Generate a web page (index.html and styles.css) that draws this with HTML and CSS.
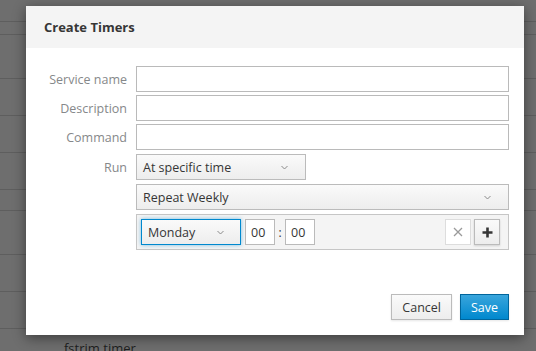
FILE: index.html
```html
<!DOCTYPE html>
<html>
<head>
  <title>Create Timers</title>
  <link rel="stylesheet" href="styles.css">
</head>
<body>
  <div class="page">
    <div class="row" style="height: 22px"></div>
    <div class="row" style="height: 13px"></div>
    <div class="row" style="height: 44px"></div>
    <div class="row" style="height: 37px"></div>
    <div class="row" style="height: 37px"></div>
    <div class="row" style="height: 37px"></div>
    <div class="row" style="height: 21px"></div>
    <div class="row" style="height: 44px"></div>
    <div class="row" style="height: 37px"></div>
    <div class="row" style="height: 37px"></div>
    <div class="row last"><span>fstrim.timer</span></div>
  </div>

  <div class="modal">
    <div class="modal-header">
      <h1>Create Timers</h1>
    </div>
    <div class="modal-body">
      <div class="field">
        <label>Service name</label>
        <div class="control"><input class="text" type="text"></div>
      </div>
      <div class="field">
        <label>Description</label>
        <div class="control"><input class="text" type="text"></div>
      </div>
      <div class="field">
        <label>Command</label>
        <div class="control"><input class="text" type="text"></div>
      </div>
      <div class="field spaced">
        <label>Run</label>
        <div class="control">
          <div class="select run">
            <span>At specific time</span>
            <svg class="caret" width="7" height="5" viewBox="0 0 7 5"><path d="M0.5 1 L3.5 4 L6.5 1" fill="none" stroke="#8a8a8a" stroke-width="1"/></svg>
          </div>
        </div>
      </div>
      <div class="field spaced">
        <label></label>
        <div class="control">
          <div class="select">
            <span>Repeat Weekly</span>
            <svg class="caret" width="7" height="5" viewBox="0 0 7 5"><path d="M0.5 1 L3.5 4 L6.5 1" fill="none" stroke="#8a8a8a" stroke-width="1"/></svg>
          </div>
        </div>
      </div>
      <div class="field spaced">
        <label></label>
        <div class="control">
          <div class="repeat-box">
            <div class="select day">
              <span>Monday</span>
              <svg class="caret" width="7" height="5" viewBox="0 0 7 5"><path d="M0.5 1 L3.5 4 L6.5 1" fill="none" stroke="#8a8a8a" stroke-width="1"/></svg>
            </div>
            <input class="time hours" type="text" value="00">
            <span class="colon">:</span>
            <input class="time" type="text" value="00">
            <div class="spacer"></div>
            <button class="icon-btn remove">
              <svg width="10" height="10" viewBox="0 0 10 10"><path d="M1 1 L9 9 M9 1 L1 9" stroke="#9a9a9a" stroke-width="1.3"/></svg>
            </button>
            <button class="icon-btn add">
              <svg width="11" height="11" viewBox="0 0 11 11"><path d="M5.5 0.5 V10.5 M0.5 5.5 H10.5" stroke="#363636" stroke-width="2.6"/></svg>
            </button>
          </div>
        </div>
      </div>
    </div>
    <div class="modal-footer">
      <button class="btn">Cancel</button>
      <button class="btn primary">Save</button>
    </div>
  </div>
</body>
</html>
```

FILE: styles.css
```css
html, body {
  margin: 0;
  padding: 0;
  height: 100%;
  overflow: hidden;
}

body {
  background-color: #6e6e6e;
  font-family: "Open Sans", "Noto Sans", sans-serif;
  font-size: 12px;
  color: #363636;
}

/* Page behind the dialog, dimmed */
.page {
  display: flex;
  flex-direction: column;
}

.row {
  border-bottom: 1px solid #5e5e5e;
  box-sizing: border-box;
}

.row.last {
  border-bottom: none;
  height: 30px;
  padding: 10px 0 0 64px;
  font-size: 13px;
  color: #1e1e1e;
}

.modal {
  position: absolute;
  left: 26px;
  top: 6px;
  width: 498px;
  height: 329px;
  background-color: #fff;
  box-shadow: 0 3px 12px rgba(0, 0, 0, 0.45);
  display: flex;
  flex-direction: column;
}

.modal-header {
  height: 42px;
  background-color: #f4f4f4;
  display: flex;
  align-items: center;
  padding-left: 18px;
}

.modal-header h1 {
  margin: 0;
  font-size: 13px;
  font-weight: bold;
  color: #363636;
}

.modal-body {
  flex: 1;
  padding: 18px 15px 0 14px;
  display: flex;
  flex-direction: column;
  gap: 3px;
}

.field {
  display: flex;
  align-items: center;
}

.field.spaced {
  margin-top: 1px;
}

.field label {
  width: 87px;
  margin-right: 9px;
  text-align: right;
  color: #86888a;
  font-size: 12.5px;
}

.control {
  flex: 1;
}

input.text {
  display: block;
  box-sizing: border-box;
  width: 100%;
  height: 26px;
  border: 1px solid #bababa;
  margin: 0;
  padding: 0 6px;
  font-family: inherit;
}

.select {
  box-sizing: border-box;
  height: 26px;
  border: 1px solid #bbb;
  background: linear-gradient(#fafafa, #ededed);
  display: flex;
  align-items: center;
  justify-content: space-between;
  padding: 0 17px 0 6px;
  font-size: 12.5px;
  color: #363636;
}

.select.run {
  width: 170px;
}

.repeat-box {
  box-sizing: border-box;
  height: 36px;
  border: 1px solid #c6c6c6;
  background-color: #f4f4f4;
  padding: 4px 8px 4px 4px;
  display: flex;
  align-items: center;
}

.select.day {
  width: 100px;
  height: 26px;
  border-color: #0088ce;
  box-shadow: 0 0 4px rgba(0, 136, 206, 0.5);
  padding-right: 16px;
}

input.time {
  box-sizing: border-box;
  width: 30px;
  height: 26px;
  margin: 0;
  border: 1px solid #bababa;
  background-color: #fff;
  padding: 0 5px;
  font-family: inherit;
  font-size: 12.5px;
  color: #363636;
}

input.time.hours {
  margin-left: 4px;
}

.colon {
  width: 10px;
  text-align: center;
  color: #363636;
}

.spacer {
  flex: 1;
}

.icon-btn {
  box-sizing: border-box;
  width: 26px;
  height: 26px;
  padding: 0;
  margin: 0;
  display: flex;
  align-items: center;
  justify-content: center;
}

.icon-btn.remove {
  border: 1px solid #ddd;
  background-color: #fff;
  margin-right: 3px;
}

.icon-btn.add {
  border: 1px solid #bbb;
  background: linear-gradient(#fafafa, #ededed);
  box-shadow: 0 1px 2px rgba(0, 0, 0, 0.15);
}

.modal-footer {
  display: flex;
  justify-content: flex-end;
  gap: 8px;
  padding: 0 15px 15px 0;
}

.btn {
  box-sizing: border-box;
  height: 26px;
  padding: 0 10px;
  border: 1px solid #bbb;
  background: linear-gradient(#fafafa, #ededed);
  font-family: inherit;
  font-size: 12.5px;
  color: #363636;
  box-shadow: 0 1px 2px rgba(0, 0, 0, 0.1);
}

.btn.primary {
  width: 49px;
  border-color: #00659c;
  background: linear-gradient(#39a5dc, #0088ce);
  color: #fff;
}
```
